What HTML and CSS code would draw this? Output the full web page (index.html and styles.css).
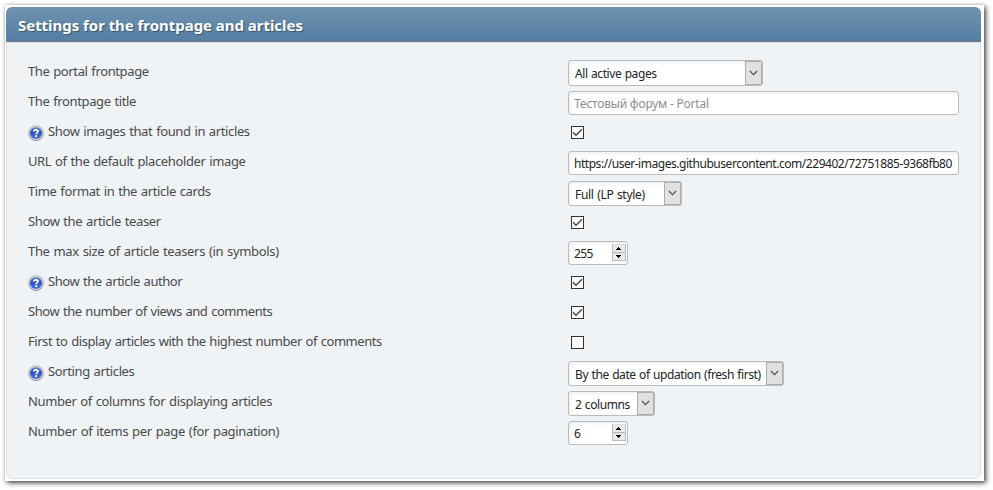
FILE: index.html
```
<!DOCTYPE html>
<html lang="en">
<head>
<meta charset="utf-8">
<title>Settings for the frontpage and articles</title>
<link rel="stylesheet" href="styles.css">
</head>
<body>
<svg class="defs" aria-hidden="true">
  <defs>
    <linearGradient id="ring" x1="0" y1="0" x2="0" y2="1"><stop offset="0" stop-color="#c6c6c8"/><stop offset="1" stop-color="#858589"/></linearGradient>
    <linearGradient id="ball" x1="0" y1="0" x2="0" y2="1"><stop offset="0" stop-color="#7089cf"/><stop offset=".45" stop-color="#3152bd"/><stop offset="1" stop-color="#4c74e8"/></linearGradient>
    <symbol id="help" viewBox="0 0 16 16">
      <circle cx="8" cy="8" r="7.9" fill="url(#ring)"/>
      <circle cx="8" cy="8" r="6.9" fill="#dcdde2"/>
      <circle cx="8" cy="8" r="6.1" fill="url(#ball)"/>
      <path d="M6 6.4C6 4.4 10 4.3 10 6.3C10 7.7 8.2 7.5 8.2 9.2" fill="none" stroke="#fff" stroke-width="1.7"/>
      <rect x="7.2" y="10.2" width="2" height="1.8" fill="#fff"/>
    </symbol>
    <symbol id="chevron" viewBox="0 0 10 6"><path d="M1 .8L5 4.8L9 .8" fill="none" stroke="#505050" stroke-width="1.3"/></symbol>
    <symbol id="check" viewBox="0 0 13 13"><path d="M2 6.3L5 9.3L11 3.3" fill="none" stroke="#444" stroke-width="1.4"/></symbol>
    <symbol id="up" viewBox="0 0 5 3"><path d="M2 0h1v1h1v1h1v1H0V2h1V1h1z" fill="#000"/></symbol>
    <symbol id="down" viewBox="0 0 5 3"><path d="M0 0h5v1H4v1H3v1H2V2H1V1H0z" fill="#000"/></symbol>
  </defs>
</svg>
<main class="card">
  <h3 class="title"><span>Settings for the frontpage and articles</span></h3>
  <div class="panel">
    <div class="row"><span class="label">The portal frontpage</span><span class="select wide first"><span class="value">All active pages</span><span class="arrow"><svg><use href="#chevron"/></svg></span></span></div>
    <div class="row"><span class="label">The frontpage title</span><input class="field" type="text" placeholder="Тестовый форум - Portal"></div>
    <div class="row"><svg class="help"><use href="#help"/></svg><span class="label">Show images that found in articles</span><span class="box"><svg><use href="#check"/></svg></span></div>
    <div class="row"><span class="label">URL of the default placeholder image</span><input class="field url" type="text" value="https://user-images.githubusercontent.com/229402/72751885-9368fb80"></div>
    <div class="row"><span class="label">Time format in the article cards</span><span class="select format"><span class="value">Full (LP style)</span><span class="arrow"><svg><use href="#chevron"/></svg></span></span></div>
    <div class="row"><span class="label">Show the article teaser</span><span class="box"><svg><use href="#check"/></svg></span></div>
    <div class="row"><span class="label loose">The max size of article teasers (in symbols)</span><span class="number"><span class="value">255</span><span class="spin"><i><svg><use href="#up"/></svg></i><i><svg><use href="#down"/></svg></i></span></span></div>
    <div class="row"><svg class="help"><use href="#help"/></svg><span class="label tight">Show the article author</span><span class="box"><svg><use href="#check"/></svg></span></div>
    <div class="row"><span class="label tight">Show the number of views and comments</span><span class="box"><svg><use href="#check"/></svg></span></div>
    <div class="row"><span class="label tight">First to display articles with the highest number of comments</span><span class="box"></span></div>
    <div class="row"><svg class="help"><use href="#help"/></svg><span class="label">Sorting articles</span><span class="select sorting"><span class="value">By the date of updation (fresh first)</span><span class="arrow"><svg><use href="#chevron"/></svg></span></span></div>
    <div class="row"><span class="label">Number of columns for displaying articles</span><span class="select columns"><span class="value">2 columns</span><span class="arrow"><svg><use href="#chevron"/></svg></span></span></div>
    <div class="row"><span class="label loose">Number of items per page (for pagination)</span><span class="number"><span class="value">6</span><span class="spin"><i><svg><use href="#up"/></svg></i><i><svg><use href="#down"/></svg></i></span></span></div>
  </div>
</main>
</body>
</html>
```
FILE: styles.css
```
* { box-sizing: border-box; }
html { height: 490px; overflow: hidden; }
body { margin: 0; padding: 5px 0 0 5px; height: 490px; background: #fff; font-family: "Noto Sans", sans-serif; }
.defs { display: block; width: 0; height: 0; }
.card {
  width: 979px; height: 476px; padding: 2px 3px 2px 1px;
  background: #fff; box-shadow: 2px 2px 5px 0 rgba(0, 0, 0, .7), 0 0 3px rgba(0, 0, 0, .2);
}
.title {
  height: 35px; margin: 0; padding-left: 12px;
  border-radius: 6px 6px 0 0; border-bottom: 1px solid #6c7883;
  background: linear-gradient(#7092b0, #557ea3);
  color: #fff; font-size: 15px; line-height: 37px; font-weight: 700;
  text-shadow: 1px 1px 1px #34536f;
}
.title span { letter-spacing: -.04px; }
.panel {
  height: 437px; padding: 14px 21px 0;
  background: #eff3f6; border: 1px solid #ddd; border-radius: 0 0 7px 7px;
}
.row { display: grid; grid-template-columns: 540px 391px; height: 30px; align-items: start; color: #4a4a4a; }
.row:has(.help) { grid-template-columns: 20px 520px 391px; }
.label { font-size: 13px; line-height: 18px; padding-top: 5px; white-space: nowrap; letter-spacing: -.38px; word-spacing: .8px; }
.loose { letter-spacing: -.33px; }
.tight { letter-spacing: -.45px; }
.help { width: 16px; height: 16px; margin-top: 8px; }
.field, .select, .number {
  background: #fff; border: 1px solid #bbb; border-radius: 3px; color: #222;
  font-family: "Noto Sans", sans-serif; font-size: 12px;
  box-shadow: inset 2px 2px 3px #eef1f5;
}
.field { width: 391px; height: 24px; margin: 4px 0 0; padding: 1px 5px 0; letter-spacing: -.21px; }
.url { letter-spacing: -.46px; }
.field::placeholder { color: #8c8c8c; opacity: 1; }
.select { display: flex; height: 25px; margin-top: 4px; padding-left: 6px; }
.first { height: 26px; margin-top: 3px; }
.wide { width: 195px; }
.format { width: 114px; }
.sorting { width: 216px; }
.columns { width: 87px; }
.value { flex: 1; line-height: 25px; white-space: nowrap; letter-spacing: -.42px; word-spacing: .7px; }
.format .value { letter-spacing: -.3px; }
.arrow { display: flex; align-items: center; justify-content: center; width: 17px; background: #e1e1e1; border: 1px solid #adadad; padding-bottom: 1px; }
.arrow svg { width: 9px; height: 6px; }
.box { display: block; width: 13px; height: 13px; margin: 9px 0 0 3px; border: 1px solid #333; background: #fff; }
.box svg { display: block; width: 13px; height: 13px; margin: -1px; }
.number { display: flex; width: 60px; height: 24px; margin-top: 4px; padding: 2px 1px 3px 5px; }
.number .value { line-height: 20px; letter-spacing: -.6px; }
.spin { display: flex; flex-direction: column; width: 14px; }
.spin i { display: flex; flex: 1; align-items: center; justify-content: center; padding-right: 1px; background: #eaeaea; border: 1px solid #bbb; border-top-color: #ddd; }
.spin svg { width: 5px; height: 3px; }
```
